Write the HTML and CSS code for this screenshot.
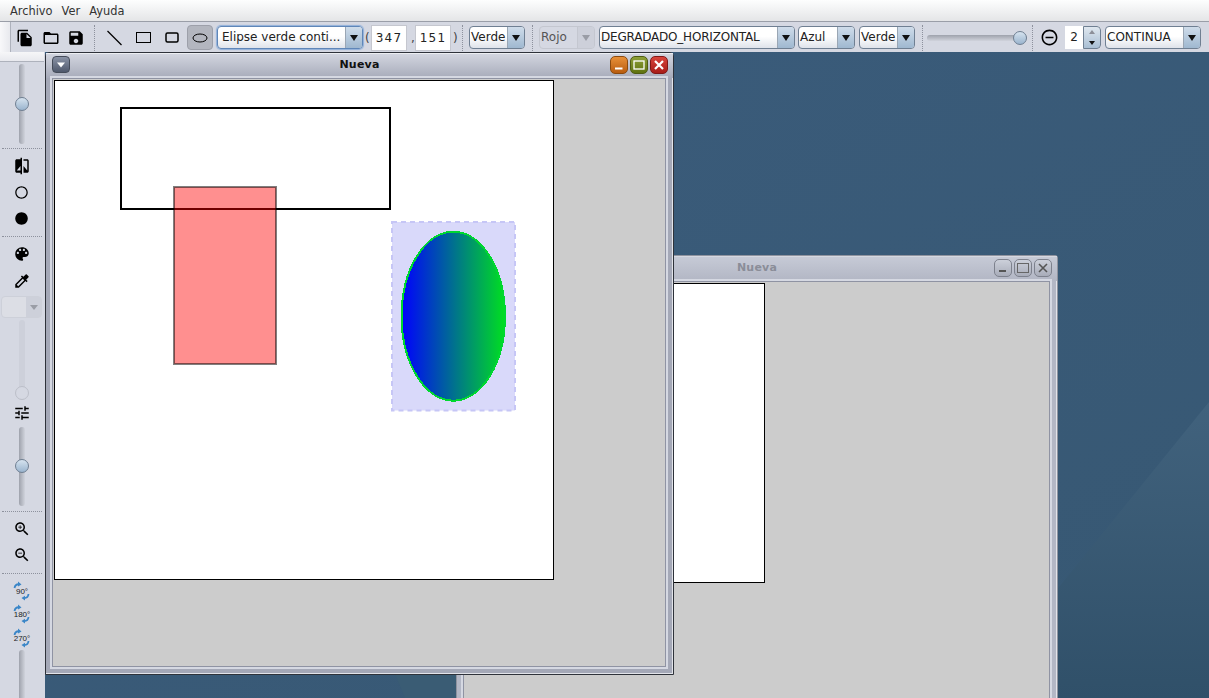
FILE: index.html
```html
<!DOCTYPE html>
<html lang="es">
<head>
  <meta charset="UTF-8">
  <title>Paint</title>
  <link rel="stylesheet" href="styles.css">
</head>
<body>
  <div class="menubar">
    <span>Archivo</span>
    <span>Ver</span>
    <span>Ayuda</span>
  </div>

  <div class="toolbar">
    <div class="tool icon-copy">
      <svg width="18" height="18" viewBox="0 0 24 24"><path d="M16 1H4c-1.100 0-2 .9-2 2v14h2V3h12V1zm-1 4l6 6v10c0 1.100-.9 2-2 2H7.990C6.890 23 6 22.100 6 21l.010-14c0-1.100.89-2 1.990-2h7zm-1 7h5.500L14 6.500V12z"/></svg>
    </div>
    <div class="tool icon-folder">
      <svg width="18" height="18" viewBox="0 0 24 24"><path d="M20 6h-8l-2-2H4c-1.100 0-1.990.9-1.990 2L2 18c0 1.100.9 2 2 2h16c1.100 0 2-.9 2-2V8c0-1.100-.9-2-2-2zm0 12H4V8h16v10z"/></svg>
    </div>
    <div class="tool icon-save">
      <svg width="18" height="18" viewBox="0 0 24 24"><path d="M17 3H5c-1.110 0-2 .9-2 2v14c0 1.100.89 2 2 2h14c1.100 0 2-.9 2-2V7l-4-4zm-5 16c-1.660 0-3-1.340-3-3s1.340-3 3-3 3 1.340 3 3-1.340 3-3 3zm3-10H5V5h10v4z"/></svg>
    </div>
    <div class="sep sep-a"></div>
    <div class="tool shape">
      <svg width="16" height="16" viewBox="0 0 16 16"><path d="M0.500 1L14.500 15" stroke="#000" stroke-width="1.200"/></svg>
    </div>
    <div class="tool shape">
      <svg width="16" height="12" viewBox="0 0 16 12"><rect x="0.500" y="0.500" width="14" height="10" fill="none" stroke="#000"/></svg>
    </div>
    <div class="tool shape">
      <svg width="16" height="12" viewBox="0 0 16 12"><rect x="1" y="1" width="12" height="9" rx="1.500" fill="none" stroke="#000" stroke-width="1.500"/></svg>
    </div>
    <div class="tool tool-on">
      <svg width="18" height="12" viewBox="0 0 18 12"><ellipse cx="9" cy="6" rx="7" ry="4" fill="none" stroke="#000"/></svg>
    </div>

    <div class="combo combo-focus w-shapes"><span>Elipse verde conti...</span><i></i></div>
    <span class="paren p-open">(</span>
    <div class="field">347</div>
    <span class="paren p-comma">,</span>
    <div class="field">151</div>
    <span class="paren p-close">)</span>
    <div class="sep sep-b"></div>
    <div class="combo w-verde"><span>Verde</span><i></i></div>
    <div class="sep sep-c"></div>
    <div class="combo combo-off w-rojo"><span>Rojo</span><i></i></div>
    <div class="combo w-degradado"><span>DEGRADADO_HORIZONTAL</span><i></i></div>
    <div class="combo w-azul"><span>Azul</span><i></i></div>
    <div class="combo w-verde2"><span>Verde</span><i></i></div>
    <div class="sep sep-d"></div>
    <div class="hslider"><b></b></div>
    <div class="sep sep-e"></div>
    <div class="tool icon-minus">
      <svg width="19" height="19" viewBox="0 0 24 24"><path d="M7 11v2h10v-2H7zm5-9C6.480 2 2 6.480 2 12s4.480 10 10 10 10-4.480 10-10S17.520 2 12 2zm0 18c-4.410 0-8-3.590-8-8s3.590-8 8-8 8 3.590 8 8-3.590 8-8 8z"/></svg>
    </div>
    <div class="spinner"><span>2</span><div class="arrows"><em class="up"></em><em class="down"></em></div></div>
    <div class="combo w-continua"><span>CONTINUA</span><i></i></div>
  </div>

  <div class="main">
    <div class="sidebar">
      <div class="side-grip"></div>
      <div class="vslider s-first"><b></b></div>
      <div class="hsep"></div>
      <div class="side-icon">
        <svg width="18" height="18" viewBox="0 0 24 24"><path d="M10 3H5c-1.100 0-2 .9-2 2v14c0 1.100.9 2 2 2h5v2h2V1h-2v2zm0 15H5l5-6v6zm9-15h-5v2h5v13l-5-6v9h5c1.100 0 2-.9 2-2V5c0-1.100-.9-2-2-2z"/></svg>
      </div>
      <div class="side-icon">
        <svg width="15" height="15" viewBox="0 0 24 24"><path d="M12 2C6.470 2 2 6.470 2 12s4.470 10 10 10 10-4.470 10-10S17.530 2 12 2zm0 18c-4.410 0-8-3.590-8-8s3.590-8 8-8 8 3.590 8 8-3.590 8-8 8z"/></svg>
      </div>
      <div class="side-icon">
        <svg width="15" height="15" viewBox="0 0 24 24"><path d="M12 2C6.480 2 2 6.480 2 12s4.480 10 10 10 10-4.480 10-10S17.520 2 12 2z"/></svg>
      </div>
      <div class="hsep sep2"></div>
      <div class="side-icon">
        <svg width="18" height="18" viewBox="0 0 24 24"><path d="M12 3c-4.970 0-9 4.030-9 9s4.030 9 9 9c.83 0 1.500-.67 1.500-1.500 0-.39-.15-.74-.39-1.010-.23-.26-.38-.61-.38-.99 0-.83.67-1.500 1.500-1.500H16c2.760 0 5-2.240 5-5 0-4.420-4.030-8-9-8zm-5.500 9c-.83 0-1.500-.67-1.500-1.500S5.670 9 6.500 9 8 9.670 8 10.500 7.330 12 6.500 12zm3-4C8.670 8 8 7.330 8 6.500S8.670 5 9.500 5s1.500.67 1.500 1.500S10.330 8 9.500 8zm5 0c-.83 0-1.500-.67-1.500-1.500S13.670 5 14.500 5s1.500.67 1.500 1.500S15.330 8 14.500 8zm3 4c-.83 0-1.500-.67-1.500-1.500S16.670 9 17.500 9s1.500.67 1.500 1.500-.67 1.500-1.500 1.500z"/></svg>
      </div>
      <div class="side-icon pick">
        <svg width="18" height="18" viewBox="0 0 24 24"><path d="M20.710 5.630l-2.340-2.340c-.39-.39-1.020-.39-1.410 0l-3.120 3.120-1.930-1.910-1.410 1.410 1.420 1.420L3 16.250V21h4.750l8.920-8.920 1.420 1.420 1.410-1.410-1.920-1.920 3.120-3.120c.4-.4.4-1.030.01-1.420zM6.920 19L5 17.080l8.060-8.060 1.920 1.920L6.920 19z"/></svg>
      </div>
      <div class="side-combo"><span></span><i></i></div>
      <div class="vslider s-off"><b></b></div>
      <div class="side-icon tune">
        <svg width="18" height="18" viewBox="0 0 24 24"><path d="M3 17v2h6v-2H3zM3 5v2h10V5H3zm10 16v-2h8v-2h-8v-2h-2v6h2zM7 9v2H3v2h4v2h2V9H7zm14 4v-2H11v2h10zm-6-4h2V7h4V5h-4V3h-2v6z"/></svg>
      </div>
      <div class="vslider s-third"><b></b></div>
      <div class="hsep sep3"></div>
      <div class="side-icon">
        <svg width="18" height="18" viewBox="0 0 24 24"><path d="M15.500 14h-.79l-.28-.27C15.410 12.590 16 11.110 16 9.500 16 5.910 13.090 3 9.500 3S3 5.910 3 9.500 5.910 16 9.500 16c1.610 0 3.090-.59 4.230-1.570l.27.28v.79l5 4.990L20.490 19l-4.990-5zm-6 0C7.010 14 5 11.990 5 9.500S7.010 5 9.500 5 14 7.010 14 9.500 11.990 14 9.500 14z"/><path d="M12 10h-2v2H9v-2H7V9h2V7h1v2h2v1z"/></svg>
      </div>
      <div class="side-icon">
        <svg width="18" height="18" viewBox="0 0 24 24"><path d="M15.500 14h-.79l-.28-.27C15.410 12.590 16 11.110 16 9.500 16 5.910 13.090 3 9.500 3S3 5.910 3 9.500 5.910 16 9.500 16c1.610 0 3.090-.59 4.230-1.570l.27.28v.79l5 4.990L20.490 19l-4.990-5zm-6 0C7.010 14 5 11.990 5 9.500S7.010 5 9.500 5 14 7.010 14 9.500 11.990 14 9.500 14z"/><path d="M7 9h5v1H7z"/></svg>
      </div>
      <div class="hsep sep4"></div>
      <div class="side-icon rot">
        <svg width="18" height="20" viewBox="0 0 18 20"><path d="M1.500 7C2 4 4 3 6.500 3.300M15.500 13C15.200 16 13 17.200 10.500 17" fill="none" stroke="#3a86c8" stroke-width="1.800"/><path d="M5 0.500L8.500 3.500L5 5.500ZM12 14.800L8.500 17L12 19.500Z" fill="#3a86c8"/><text x="9" y="12.500">90°</text></svg>
      </div>
      <div class="side-icon rot">
        <svg width="18" height="20" viewBox="0 0 18 20"><path d="M1.500 7C2 4 4 3 6.500 3.300M15.500 13C15.200 16 13 17.200 10.500 17" fill="none" stroke="#3a86c8" stroke-width="1.800"/><path d="M5 0.500L8.500 3.500L5 5.500ZM12 14.800L8.500 17L12 19.500Z" fill="#3a86c8"/><text x="9" y="12.500">180°</text></svg>
      </div>
      <div class="side-icon rot">
        <svg width="18" height="20" viewBox="0 0 18 20"><path d="M1.500 7C2 4 4 3 6.500 3.300M15.500 13C15.200 16 13 17.200 10.500 17" fill="none" stroke="#3a86c8" stroke-width="1.800"/><path d="M5 0.500L8.500 3.500L5 5.500ZM12 14.800L8.500 17L12 19.500Z" fill="#3a86c8"/><text x="9" y="12.500">270°</text></svg>
      </div>
      <div class="vslider s-last"></div>
    </div>

    <div class="desktop">
      <svg class="wallpaper" width="1164" height="646" viewBox="0 0 1164 646">
        <defs>
          <linearGradient id="wall" x1="0" y1="0" x2="1" y2="1">
            <stop offset="0" stop-color="#3b5c7c"/>
            <stop offset="1" stop-color="#375873"/>
          </linearGradient>
          <linearGradient id="wall-low" x1="0" y1="0" x2="0" y2="1">
            <stop offset="0" stop-color="#41627d"/>
            <stop offset="1" stop-color="#305069"/>
          </linearGradient>
        </defs>
        <rect width="1164" height="646" fill="url(#wall)"/>
        <path d="M1164 350V646H1000L1010 540Z" fill="url(#wall-low)"/>
        <path d="M360 646L350 622H420V646Z" fill="#3a5c74"/>
      </svg>

      <div class="window win-back">
        <div class="titlebar">
          <span class="title">Nueva</span>
          <div class="win-btn grey"><svg width="10" height="10" viewBox="0 0 10 10"><path d="M1 8H8" stroke="#555" stroke-width="2"/></svg></div>
          <div class="win-btn grey"><svg width="12" height="10" viewBox="0 0 12 10"><rect x="0.500" y="0.500" width="11" height="9" fill="none" stroke="#666" stroke-width="1"/></svg></div>
          <div class="win-btn grey"><svg width="10" height="10" viewBox="0 0 10 10"><path d="M1 1L9 9M9 1L1 9" stroke="#555" stroke-width="1.600"/></svg></div>
        </div>
        <div class="pane"><div class="canvas canvas-small"></div></div>
      </div>

      <div class="window win-front">
        <div class="titlebar">
          <div class="win-menu"><svg width="10" height="6" viewBox="0 0 10 6"><path d="M1 0.500H9L5 5.500Z" fill="#fff"/></svg></div>
          <span class="title">Nueva</span>
          <div class="win-btn orange"><svg width="10" height="10" viewBox="0 0 10 10"><path d="M1 8.500H8.500" stroke="#fff" stroke-width="2"/></svg></div>
          <div class="win-btn olive"><svg width="12" height="10" viewBox="0 0 12 10"><rect x="1" y="1" width="10" height="8" fill="none" stroke="#fff" stroke-width="1.300"/></svg></div>
          <div class="win-btn red"><svg width="10" height="10" viewBox="0 0 10 10"><path d="M1 1L9 9M9 1L1 9" stroke="#fff" stroke-width="2.200"/></svg></div>
        </div>
        <div class="pane">
          <div class="canvas">
            <svg width="498" height="498" viewBox="55 81 498 498">
              <defs>
                <linearGradient id="degradado" x1="0" y1="0" x2="1" y2="0">
                  <stop offset="0" stop-color="#0000ff"/>
                  <stop offset="1" stop-color="#00e020"/>
                </linearGradient>
              </defs>
              <rect x="121" y="108" width="269" height="101" fill="none" stroke="#000" stroke-width="2"/>
              <rect x="174" y="187" width="102" height="177" fill="#ff0000" fill-opacity="0.44" stroke="#000" stroke-opacity="0.5" stroke-width="2"/>
              <rect x="392" y="222" width="123" height="188.500" fill="#d9d9fa" stroke="#c6c6f6" stroke-width="2" stroke-dasharray="5 4"/>
              <ellipse cx="453.300" cy="316.200" rx="51.700" ry="84.500" fill="url(#degradado)" stroke="#00d830" stroke-width="2" shape-rendering="crispEdges"/>
            </svg>
          </div>
        </div>
      </div>
    </div>
  </div>
</body>
</html>
```

FILE: styles.css
```css
* {
  box-sizing: border-box;
}
html, body {
  margin: 0;
  height: 100%;
  overflow: hidden;
}
body {
  font-family: 'DejaVu Sans', sans-serif;
  font-size: 12px;
  color: #222;
  background: #d5d8e2;
  display: flex;
  flex-direction: column;
}
svg {
  display: block;
}

/* menu */
.menubar {
  height: 22px;
  flex: none;
  padding-left: 10px;
  display: flex;
  gap: 9px;
  align-items: center;
  font-size: 11.400px;
  color: #333;
  background: linear-gradient(#fdfefe, #e4e5e7);
  border-bottom: 1px solid #9a9ea8;
}

/* top toolbar */
.toolbar {
  height: 30px;
  flex: none;
  display: flex;
  align-items: center;
  padding: 1px 0 0 10px;
  background: #d5d8e2;
  position: relative;
}
.toolbar::before {
  content: "";
  position: absolute;
  left: 0;
  top: 0;
  width: 10px;
  height: 30px;
  background: linear-gradient(90deg, #f8f8fa, #e8e9ee);
  border-right: 1px solid #aeb2bc;
}
.tool {
  display: flex;
  align-items: center;
  justify-content: center;
}
.icon-copy { width: 18px; margin-left: 6px; }
.icon-folder { width: 18px; margin-left: 8px; }
.icon-save { width: 18px; margin-left: 7px; }
.shape { width: 16px; }
.shape + .shape { margin-left: 13px; }
.tool-on {
  width: 26px;
  height: 25px;
  margin-left: 6px;
  background: #b3b6bf;
  border: 1px solid #9da0aa;
  border-radius: 4px;
}
.sep {
  width: 1px;
  height: 26px;
  border-left: 1px dotted #8d919d;
}
.sep-a { margin-left: 9px; margin-right: 12px; }
.sep-b { margin-left: 5px; }
.sep-c { margin-left: 7px; }
.sep-d { margin-left: 7px; }
.sep-e { margin-left: 5px; }

.combo {
  height: 23px;
  display: flex;
  align-items: stretch;
  border: 1px solid #6f7f92;
  border-radius: 4px;
  background: linear-gradient(#fff, #fff 45%, #dfe3ea);
  overflow: hidden;
  font-size: 12px;
}
.combo span {
  flex: 1;
  padding-left: 1px;
  line-height: 21px;
  white-space: nowrap;
  overflow: hidden;
}
.combo i {
  width: 17px;
  flex: none;
  display: flex;
  align-items: center;
  justify-content: center;
  background: linear-gradient(#cfdcea, #9fb8d0);
  border-left: 1px solid #9aa6b4;
}
.combo i::after {
  content: "";
  border: 4px solid transparent;
  border-top: 6px solid #111;
  border-bottom: 0;
}
.combo-focus {
  border: 1px solid #5f86b8;
  box-shadow: 0 0 1px 1px #8fb0da;
}
.combo-focus span { padding-left: 4px; }
.combo-off {
  background: #d5d8e2;
  border-color: #c4c7d0;
  color: #555;
}
.combo-off i {
  background: #cdd0da;
  border-left-color: #c4c7d0;
}
.combo-off i::after { border-top-color: #9a9da6; }

.w-shapes { width: 146px; margin-left: 4px; }
.w-verde { width: 56px; margin-left: 6px; }
.w-rojo { width: 56px; margin-left: 6px; }
.w-degradado { width: 196px; margin-left: 4px; letter-spacing: -0.200px; }
.w-azul { width: 57px; margin-left: 3px; }
.w-verde2 { width: 56px; margin-left: 4px; }
.w-continua { width: 96px; margin-left: 4px; }

.paren { color: #444; font-size: 12px; }
.p-open { width: 6px; margin-left: 2px; }
.p-comma { width: 4px; margin-left: 4px; }
.p-close { margin-left: 2px; width: 4px; }
.field {
  width: 36px;
  height: 26px;
  background: #fff;
  border: 1px solid #c5c7cf;
  text-align: center;
  line-height: 24px;
  letter-spacing: 1.200px;
  font-size: 12px;
}

.hslider {
  width: 100px;
  height: 6px;
  margin-left: 4px;
  position: relative;
  border-radius: 3px;
  background: linear-gradient(#9ea2ac, #d0d3dc);
}
.hslider b {
  position: absolute;
  right: 0;
  top: -4px;
  width: 14px;
  height: 14px;
  border-radius: 50%;
  background: linear-gradient(#d6e3ef, #9ab4ce);
  border: 1px solid #6f7f92;
}
.icon-minus { width: 19px; margin-left: 7px; }
.spinner {
  width: 36px;
  height: 23px;
  margin-left: 6px;
  display: flex;
  background: #fff;
  border-radius: 0 4px 4px 0;
}
.spinner span {
  width: 18px;
  text-align: center;
  line-height: 23px;
}
.arrows {
  flex: 1;
  display: flex;
  flex-direction: column;
  border: 1px solid #6f7f92;
  border-radius: 0 4px 4px 0;
  background: linear-gradient(#dfe7ef, #a9bfd4);
}
.arrows em {
  flex: 1;
  display: flex;
  align-items: center;
  justify-content: center;
}
.arrows em::after {
  content: "";
  border: 3.500px solid transparent;
}
.arrows .up::after { border-top: 0; border-bottom: 4px solid #8c8f98; }
.arrows .down::after { border-bottom: 0; border-top: 4px solid #111; }

/* left toolbar */
.main {
  flex: 1;
  min-height: 0;
  display: flex;
}
.sidebar {
  width: 45px;
  flex: none;
  background: #d5d8e2;
  padding-right: 2px;
  display: flex;
  flex-direction: column;
  align-items: center;
  overflow: hidden;
}
.side-grip {
  width: 45px;
  height: 10px;
  flex: none;
  margin-bottom: 2px;
  background: linear-gradient(#f6f6f8, #e8e9ee);
  border-bottom: 1px solid #aeb2bc;
}
.vslider {
  width: 6px;
  flex: none;
  border-radius: 3px;
  position: relative;
  background: linear-gradient(90deg, #9ea2ac, #d0d3dc);
}
.vslider b {
  position: absolute;
  left: -4px;
  width: 14px;
  height: 14px;
  border-radius: 50%;
  background: linear-gradient(#d6e3ef, #9ab4ce);
  border: 1px solid #6f7f92;
}
.s-first { height: 80px; }
.s-first b { top: 33px; }
.s-third { height: 79px; margin-top: 2px; }
.s-third b { top: 32px; }
.s-off {
  height: 80px;
  margin-top: 2px;
  background: #cdd0da;
}
.s-off b {
  bottom: 0;
  background: #d5d8e2;
  border-color: #bcbfc9;
}
.s-last { height: 60px; }
.hsep {
  width: 40px;
  flex: none;
  height: 1px;
  margin: 4px 0;
  border-top: 1px dotted #8d919d;
}
.sep2 { margin: 5px 0 4px; }
.sep3 { margin: 5px 0 4px; }
.sep4 { margin: 5px 0; }
.side-icon {
  height: 26px;
  flex: none;
  display: flex;
  align-items: center;
  justify-content: center;
}
.side-icon.pick { margin-top: 1px; }
.side-icon.rot { height: 23.500px; }
.side-icon.tune { height: 24px; margin-top: 1px; }
.side-icon text {
  font-family: 'Liberation Sans', sans-serif;
  font-size: 8px;
  text-anchor: middle;
  fill: #222;
}
.side-combo {
  width: 41px;
  height: 22px;
  flex: none;
  margin-top: 2px;
  display: flex;
  border: 1px solid #cdd0d9;
  border-radius: 4px;
  background: #dcdee5;
}
.side-combo span { flex: 1; }
.side-combo i {
  width: 15px;
  display: flex;
  align-items: center;
  justify-content: center;
  background: #cdd0da;
}
.side-combo i::after {
  content: "";
  border: 4px solid transparent;
  border-top: 5px solid #9a9da6;
  border-bottom: 0;
}

/* desktop and internal frames */
.desktop {
  flex: 1;
  position: relative;
  overflow: hidden;
}
.wallpaper {
  position: absolute;
  left: 0;
  top: 0;
}
.window {
  position: absolute;
  display: flex;
  flex-direction: column;
  background: #a4a8b7;
  border: 1px solid #2e323a;
  padding: 0 7px 7px 6px;
  box-shadow: inset -1px -1px 0 #e2e4ea;
}
.win-front {
  left: 0;
  top: 0;
  width: 629px;
  height: 623px;
  border-radius: 4px 4px 0 0;
  z-index: 2;
}
.win-back {
  left: 411px;
  top: 203px;
  width: 602px;
  height: 470px;
  background: #b3b7c5;
  border-color: #8f939f;
  border-radius: 3px 3px 0 0;
}
.titlebar {
  height: 25px;
  flex: none;
  margin: 0 -7px 0 -6px;
  padding: 0 5px 3px 6px;
  display: flex;
  align-items: center;
  gap: 2px;
  position: relative;
  background: linear-gradient(#d2d5df, #a7abba);
  border-top: 1px solid #eceef2;
}
.win-back .titlebar {
  background: linear-gradient(#c6cad6, #b2b6c4);
  justify-content: flex-end;
  border-top-color: #d5d8e0;
}
.title {
  font-size: 11px;
  font-weight: bold;
  color: #111;
  position: absolute;
  left: 0;
  right: 0;
  text-align: center;
  letter-spacing: 0.200px;
}
.win-back .title {
  color: #8a8d98;
}
.win-menu {
  width: 18px;
  height: 17px;
  display: flex;
  align-items: center;
  justify-content: center;
  border-radius: 4px;
  background: linear-gradient(#8a93a6, #4f586c);
  border: 1px solid #454c5a;
}
.win-btn {
  width: 18px;
  height: 18px;
  display: flex;
  align-items: center;
  justify-content: center;
  border-radius: 5px;
  position: relative;
}
.win-menu + .title + .win-btn { margin-left: auto; }
.orange { background: linear-gradient(#e89038, #b85c10); border: 1px solid #8a4a10; }
.olive { background: linear-gradient(#8ea038, #5f7210); border: 1px solid #4e5c14; }
.red { background: linear-gradient(#d8443c, #a81c18); border: 1px solid #801818; }
.grey { background: linear-gradient(#ccd0da, #a8acb9); border: 1px solid #7d818d; }
.pane {
  flex: 1;
  min-height: 0;
  padding: 1px;
  background: #cccccc;
  border: 1px solid #8f93a3;
  box-shadow: 0 0 0 2px #d5d8e2;
  position: relative;
}
.canvas {
  width: 500px;
  height: 500px;
  background: #fff;
  border: 1px solid #000;
}
.canvas-small {
  width: 300px;
  height: 300px;
}
```
